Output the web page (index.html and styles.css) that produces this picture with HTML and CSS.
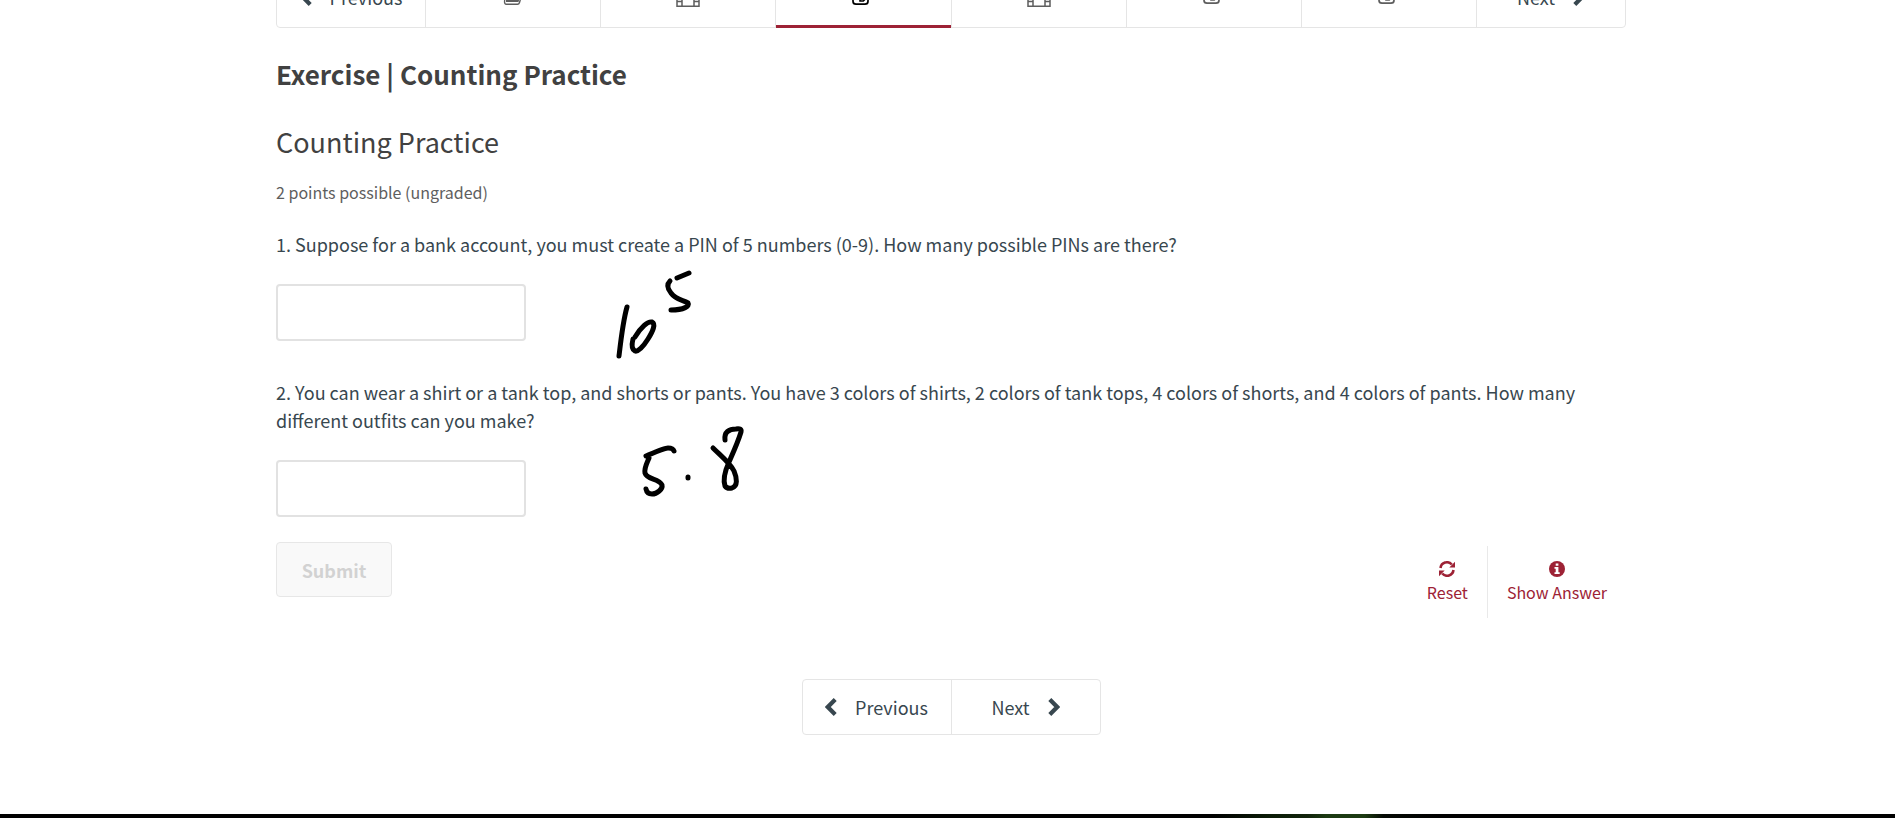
FILE: index.html
```html
<!DOCTYPE html>
<html lang="en">
<head>
<meta charset="utf-8">
<title>Exercise | Counting Practice</title>
<link rel="stylesheet" href="styles.css">
</head>
<body>
<svg class="defs" aria-hidden="true">
  <symbol id="chev-left" viewBox="0 0 12 18"><path d="M10.200 1.500 2.800 9l7.400 7.500" fill="none" stroke="currentColor" stroke-width="4.200"/></symbol>
  <symbol id="chev-right" viewBox="0 0 12 18"><path d="M1.800 1.500 9.200 9l-7.400 7.500" fill="none" stroke="currentColor" stroke-width="4.200"/></symbol>
  <symbol id="film" viewBox="0 0 24 20"><path d="M1 1h22v18.200H1zM6 1v18M18 1v18M1 5.500h5M1 10h5M1 14.500h5M18 5.500h5M18 10h5M18 14.500h5M6 10h12" fill="none" stroke="currentColor" stroke-width="1.500"/></symbol>
  <symbol id="book" viewBox="0 0 20 20"><path d="M5 1h13l-3.500 11H2z" fill="none" stroke="currentColor" stroke-width="1.500"/><path d="M3 11h12l2-4h1l-2.500 8H3z" fill="currentColor"/><path d="M1.700 13Q1 17.300 3.500 17.300h11q1.500 0 2-1.800L19 7" fill="none" stroke="currentColor" stroke-width="1.400"/></symbol>
  <symbol id="edit" viewBox="0 0 22 20"><path d="M14 1.800H4Q1 1.800 1 4.800v8.400q0 3 3 3h9q3 0 3-3V11" fill="none" stroke="currentColor" stroke-width="1.700"/><path d="M8 9.700 17.300.4l3.300 3.300-9.300 9.300H8z" fill="none" stroke="currentColor" stroke-width="1.600"/></symbol>
</svg>
<main class="page">
  <nav class="sequence" aria-label="Sequence">
    <div class="sequence-bar">
      <button class="step" type="button"><svg class="chev"><use href="#chev-left"/></svg><span>Previous</span></button>
      <button class="tab" type="button" aria-label="Reading"><svg class="tab-icon"><use href="#book"/></svg></button>
      <button class="tab" type="button" aria-label="Video"><svg class="tab-icon film"><use href="#film"/></svg></button>
      <button class="tab active" type="button" aria-label="Exercise"><svg class="tab-icon edit"><use href="#edit"/></svg></button>
      <button class="tab" type="button" aria-label="Video"><svg class="tab-icon film"><use href="#film"/></svg></button>
      <button class="tab" type="button" aria-label="Exercise"><svg class="tab-icon edit"><use href="#edit"/></svg></button>
      <button class="tab" type="button" aria-label="Exercise"><svg class="tab-icon edit"><use href="#edit"/></svg></button>
      <button class="step" type="button"><span>Next</span><svg class="chev"><use href="#chev-right"/></svg></button>
    </div>
  </nav>

  <h1 class="unit-title">Exercise | Counting Practice</h1>
  <h2 class="problem-title">Counting Practice</h2>
  <p class="points">2 points possible (ungraded)</p>

  <form class="problem">
    <div class="question">
      <label class="prompt" for="answer-1">1. Suppose for a bank account, you must create a PIN of 5 numbers (0-9). How many possible PINs are there?</label>
      <input class="answer" id="answer-1" type="text">
      <svg class="ink ink-first" viewBox="0 0 90 100" aria-hidden="true">
        <path d="M17 42C13 56 11 74 9 91M25 72C31 62 38 56 42 57C46 59 43 66 38 74C33 82 28 87 25 86C21 84 22 78 23 74M67 13l12-5M60 16C57 19 57 23 61 28C66 35 73 35 78 38C80 41 74 45 61 45"/>
      </svg>
    </div>
    <div class="question">
      <label class="prompt" for="answer-2">2. You can wear a shirt or a tank top, and shorts or pants. You have 3 colors of shirts, 2 colors of tank tops, 4 colors of shorts, and 4 colors of pants. How many different outfits can you make?</label>
      <input class="answer" id="answer-2" type="text">
      <svg class="ink ink-second" viewBox="0 0 120 80" aria-hidden="true">
        <path d="M11 36C18 33 29 28 33 28Q38 28 39 31M14 38C12 43 9 48 10 53C12 60 24 58 27 65C28 69 22 74 17 74Q12 74 11 69M53 57v1M90 20C89 12 94 9 101 9Q107 8 106 12C103 22 98 33 94 42C90 51 88 60 90 66Q92 69 97 68C103 66 102 58 99 51C95 43 86 36 78 28"/>
      </svg>
    </div>
    <div class="problem-footer">
      <button class="submit" type="submit" disabled>Submit</button>
      <div class="actions">
        <button class="action" type="button">
          <svg class="action-icon" viewBox="0 0 16 16" aria-hidden="true"><path d="M1.500 7A6.500 6.500 0 0 1 12.800 3.500M14.500 9A6.500 6.500 0 0 1 3.200 12.500" fill="none" stroke="currentColor" stroke-width="2.600"/><path d="M16 .8V6.500h-5.700zM0 15.200V9.500h5.700z" fill="currentColor"/></svg>
          <span>Reset</span>
        </button>
        <button class="action" type="button">
          <svg class="action-icon" viewBox="0 0 16 16" aria-hidden="true"><circle cx="8" cy="8" r="8" fill="currentColor"/><path d="M6.700 2.500h2.700v2.300H6.700zM5.500 6h3.900v5.200h1.300V13H5.500v-1.800h1.200V7.800H5.500z" fill="#fff"/></svg>
          <span>Show Answer</span>
        </button>
      </div>
    </div>
  </form>

  <nav class="pager" aria-label="Unit">
    <button class="step" type="button"><svg class="chev"><use href="#chev-left"/></svg><span>Previous</span></button>
    <button class="step" type="button"><span>Next</span><svg class="chev"><use href="#chev-right"/></svg></button>
  </nav>
</main>
<div class="backdrop-edge"></div>
</body>
</html>
```

FILE: styles.css
```css
* { box-sizing: border-box; }

body {
  margin: 0;
  min-height: 100vh;
  display: flex;
  flex-direction: column;
  background: #fff;
  color: #414141;
  font-family: "Noto Sans CJK SC", "Noto Sans", sans-serif;
  font-size: 18px;
  line-height: 28px;
}

button {
  margin: 0;
  padding: 0;
  border: 0;
  background: none;
  font: inherit;
  color: inherit;
}

.defs { position: absolute; width: 0; height: 0; }

.page { padding: 0 269px 0 276px; }

.sequence {
  height: 28px;
  display: flex;
  align-items: flex-end;
  overflow: hidden;
}

.sequence-bar {
  flex: 1;
  height: 62px;
  display: flex;
  border: 1px solid #e5e5e5;
  border-radius: 4px;
}

.step {
  width: 148px;
  display: flex;
  align-items: center;
  justify-content: center;
  gap: 18px;
  color: #38474f;
}

.chev { width: 12px; height: 18px; }

.tab {
  flex: 1;
  display: flex;
  align-items: center;
  justify-content: center;
  border-left: 1px solid #e5e5e5;
  color: #5e5e5e;
}

.step:last-child { width: 149px; border-left: 1px solid #e5e5e5; }

.tab.active {
  margin-bottom: -1px;
  color: #000;
  box-shadow: inset 0 -3px #9d2235;
}

.tab-icon { width: 20px; height: 20px; }
.tab-icon.film { width: 24px; }
.tab-icon.edit { width: 22px; }

.unit-title {
  margin: 28px 0 32px;
  font-size: 26px;
  font-weight: 600;
  line-height: 36px;
}

.problem-title {
  margin: 0 0 20px;
  font-size: 27px;
  font-weight: 400;
  line-height: 36px;
}

.points {
  margin: 0 0 26px;
  color: #5e5e5e;
  font-size: 16px;
  line-height: 24px;
}

.question { position: relative; margin-bottom: 37px; }
.question + .question { margin-bottom: 25px; }

.prompt { display: block; margin-bottom: 26px; color: #38474f; }

.answer {
  display: block;
  width: 250px;
  height: 57px;
  padding: 0 12px;
  border: 2px solid #e2e2e2;
  border-radius: 4px;
  background: #fff;
  color: #38474f;
  font: inherit;
}

.ink {
  position: absolute;
  fill: none;
  stroke: #000;
  stroke-width: 5;
  stroke-linecap: round;
  stroke-linejoin: round;
}

.ink-first { left: 334px; top: 35px; width: 90px; height: 100px; }
.ink-second { left: 359px; top: 42px; width: 120px; height: 80px; }

.problem-footer {
  display: flex;
  align-items: flex-start;
  justify-content: space-between;
}

.submit {
  width: 116px;
  height: 55px;
  border: 1px solid #e7e7e7;
  border-radius: 4px;
  background: #f9f9f9;
  color: #d2d2d2;
  font-weight: 600;
}

.actions { display: flex; padding-top: 4px; }

.action {
  height: 72px;
  padding: 0 19px;
  display: flex;
  flex-direction: column;
  align-items: center;
  justify-content: center;
  gap: 3px;
  color: #9d2235;
  font-size: 16px;
  line-height: 24px;
}

.action + .action { border-left: 1px solid #e9e9e9; }
.action-icon { width: 16px; height: 16px; }

.pager {
  width: fit-content;
  height: 56px;
  margin: 61px auto 0;
  display: flex;
  border: 1px solid #e5e5e5;
  border-radius: 4px;
}

.backdrop-edge {
  height: 4px;
  margin-top: auto;
  background: linear-gradient(90deg, #000 64%, #0b1c07 67%, #12240c 69%, #1c3a12 70%, #1c3a12 72%, #050a04 73%, #000 76%);
}
```
